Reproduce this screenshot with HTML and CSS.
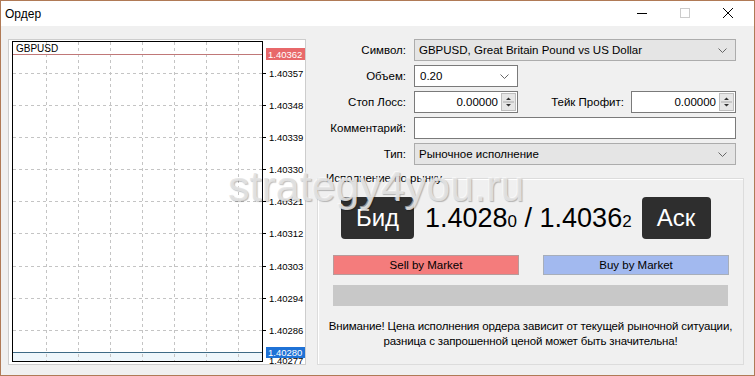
FILE: index.html
```html
<!DOCTYPE html>
<html lang="ru">
<head>
<meta charset="utf-8">
<title>Ордер</title>
<link rel="stylesheet" href="styles.css">
</head>
<body>
<div class="window">
  <div class="titlebar">
    <span class="title">Ордер</span>
    <svg class="controls" width="130" height="25" viewBox="0 0 130 25">
      <line x1="13" y1="12.5" x2="23" y2="12.5" stroke="#000" stroke-width="1"/>
      <rect x="56.5" y="7.5" width="9" height="9" fill="none" stroke="#cccccc" stroke-width="1"/>
      <path d="M99 7 L109 17 M109 7 L99 17" stroke="#000" stroke-width="1" fill="none"/>
    </svg>
  </div>
  <div class="body">
    <div class="chart">
      <svg width="296" height="324" viewBox="0 0 296 324">
        <rect x="3.5" y="312.5" width="250" height="9" fill="#eef6fb"/>
        <g stroke="#c4c4c4" stroke-width="1" stroke-dasharray="3 3">
          <line x1="37.5" y1="2" x2="37.5" y2="321"/>
          <line x1="69.5" y1="2" x2="69.5" y2="321"/>
          <line x1="101.5" y1="2" x2="101.5" y2="321"/>
          <line x1="133.5" y1="2" x2="133.5" y2="321"/>
          <line x1="165.5" y1="2" x2="165.5" y2="321"/>
          <line x1="197.5" y1="2" x2="197.5" y2="321"/>
          <line x1="229.5" y1="2" x2="229.5" y2="321"/>
          <line x1="4" y1="33.5" x2="253" y2="33.5"/>
          <line x1="4" y1="65.5" x2="253" y2="65.5"/>
          <line x1="4" y1="97.5" x2="253" y2="97.5"/>
          <line x1="4" y1="129.5" x2="253" y2="129.5"/>
          <line x1="4" y1="161.5" x2="253" y2="161.5"/>
          <line x1="4" y1="193.5" x2="253" y2="193.5"/>
          <line x1="4" y1="226.5" x2="253" y2="226.5"/>
          <line x1="4" y1="258.5" x2="253" y2="258.5"/>
          <line x1="4" y1="290.5" x2="253" y2="290.5"/>
        </g>
        <g stroke="#000" stroke-width="1">
          <line x1="254" y1="33.5" x2="257" y2="33.5"/>
          <line x1="254" y1="65.5" x2="257" y2="65.5"/>
          <line x1="254" y1="97.5" x2="257" y2="97.5"/>
          <line x1="254" y1="129.5" x2="257" y2="129.5"/>
          <line x1="254" y1="161.5" x2="257" y2="161.5"/>
          <line x1="254" y1="193.5" x2="257" y2="193.5"/>
          <line x1="254" y1="226.5" x2="257" y2="226.5"/>
          <line x1="254" y1="258.5" x2="257" y2="258.5"/>
          <line x1="254" y1="290.5" x2="257" y2="290.5"/>
        </g>
        <line x1="4" y1="14.5" x2="253" y2="14.5" stroke="#c07878" stroke-width="1"/>
        <line x1="4" y1="312.5" x2="253" y2="312.5" stroke="#3d6a86" stroke-width="1"/>
        <rect x="3.5" y="1.5" width="250" height="320" fill="none" stroke="#000" stroke-width="1"/>
        <text class="sym" x="7" y="12">GBPUSD</text>
        <g class="axis">
          <text x="260" y="37">1.40357</text>
          <text x="260" y="69">1.40348</text>
          <text x="260" y="101">1.40339</text>
          <text x="260" y="133">1.40330</text>
          <text x="260" y="165">1.40321</text>
          <text x="260" y="197">1.40312</text>
          <text x="260" y="230">1.40303</text>
          <text x="260" y="262">1.40294</text>
          <text x="260" y="294">1.40286</text>
          <text x="260" y="324">1.40277</text>
        </g>
        <rect x="257" y="8" width="39" height="12" fill="#e8686a"/>
        <text class="tag" x="259" y="17.5">1.40362</text>
        <rect x="257" y="307" width="39" height="11" fill="#1f72d6"/>
        <text class="tag" x="259" y="316">1.40280</text>
      </svg>
    </div>
    <div class="form">
      <div class="fields">
        <label class="lbl">Символ:</label>
        <div class="select grey wide"><span>GBPUSD, Great Britain Pound vs US Dollar</span><svg class="chev" width="9" height="5" viewBox="0 0 9 5"><path d="M0.5 0.5 L4.5 4.5 L8.5 0.5" fill="none" stroke="#666" stroke-width="1"/></svg></div>

        <label class="lbl">Объем:</label>
        <div class="row"><div class="select white vol"><span>0.20</span><svg class="chev" width="9" height="5" viewBox="0 0 9 5"><path d="M0.5 0.5 L4.5 4.5 L8.5 0.5" fill="none" stroke="#666" stroke-width="1"/></svg></div></div>

        <label class="lbl">Стоп Лосс:</label>
        <div class="row">
          <div class="spin"><span class="val">0.00000</span><span class="spinbtn"><svg width="13" height="16" viewBox="0 0 13 16"><path d="M4 6 L6.5 3.5 L9 6 Z M4 10 L6.5 12.5 L9 10 Z" fill="#333"/><line x1="1" y1="8" x2="12" y2="8" stroke="#aaa"/></svg></span></div>
          <span class="lbl mid">Тейк Профит:</span>
          <div class="spin tp"><span class="val">0.00000</span><span class="spinbtn"><svg width="13" height="16" viewBox="0 0 13 16"><path d="M4 6 L6.5 3.5 L9 6 Z M4 10 L6.5 12.5 L9 10 Z" fill="#333"/><line x1="1" y1="8" x2="12" y2="8" stroke="#aaa"/></svg></span></div>
        </div>

        <label class="lbl">Комментарий:</label>
        <div class="input wide"></div>

        <label class="lbl">Тип:</label>
        <div class="select grey wide"><span>Рыночное исполнение</span><svg class="chev" width="9" height="5" viewBox="0 0 9 5"><path d="M0.5 0.5 L4.5 4.5 L8.5 0.5" fill="none" stroke="#666" stroke-width="1"/></svg></div>
      </div>

      <fieldset class="market">
        <legend>Исполнение по рынку</legend>
        <div class="quote">
          <div class="badge bid">Бид</div>
          <div class="prices">1.4028<small>0</small> / 1.4036<small>2</small></div>
          <div class="badge ask">Аск</div>
        </div>
        <div class="buttons">
          <button class="btn sell">Sell by Market</button>
          <button class="btn buy">Buy by Market</button>
        </div>
        <div class="progress"></div>
        <p class="warn">Внимание! Цена исполнения ордера зависит от текущей рыночной ситуации,<br>разница с запрошенной ценой может быть значительна!</p>
      </fieldset>
    </div>
  </div>
  <div class="watermark">strategy4you.ru</div>
</div>
</body>
</html>
```

FILE: styles.css
```css
html, body {
  margin: 0;
  padding: 0;
  background: #ffffff;
}

.window {
  position: relative;
  width: 755px;
  height: 376px;
  box-sizing: border-box;
  border: 1px solid #b07a56;
  background: #f0f0f0;
  display: flex;
  flex-direction: column;
  overflow: hidden;
  font-family: "Liberation Sans", Arial, sans-serif;
  font-size: 11.5px;
  color: #000;
}

.titlebar {
  height: 25px;
  flex: none;
  background: #ffffff;
  display: flex;
  align-items: center;
  justify-content: space-between;
  padding-left: 4px;
}

.title {
  font-size: 12px;
}

.controls {
  display: block;
}

.body {
  display: flex;
  padding: 13px 0 0 7px;
}

.chart {
  width: 298px;
  height: 326px;
  box-sizing: border-box;
  border: 1px solid #cdcdcd;
  background: #ffffff;
  flex: none;
}

.chart svg {
  display: block;
}

.chart text {
  font-family: "Liberation Sans", Arial, sans-serif;
  font-size: 9.5px;
  fill: #000;
}

.chart .sym {
  font-size: 10px;
}

.chart .tag {
  fill: #ffffff;
}

.form {
  margin-left: 8px;
  width: 430px;
  display: flex;
  flex-direction: column;
}

.fields {
  display: grid;
  grid-template-columns: 92px 322px;
  column-gap: 8px;
  row-gap: 4px;
  grid-auto-rows: 22px;
}

.lbl {
  display: flex;
  align-items: center;
  justify-content: flex-end;
  color: #000;
}

.row {
  display: flex;
  align-items: stretch;
}

.select,
.input,
.spin {
  box-sizing: border-box;
  height: 22px;
  display: flex;
  align-items: center;
}

.select {
  justify-content: space-between;
  padding: 0 8px 0 4px;
}

.select.grey {
  background: #e5e5e5;
  border: 1px solid #acacac;
}

.select.white {
  background: #ffffff;
  border: 1px solid #7a7a7a;
}

.select.vol {
  width: 104px;
  padding-left: 5px;
}

.chev {
  display: block;
}

.input {
  background: #ffffff;
  border: 1px solid #7a7a7a;
}

.spin {
  width: 104px;
  background: #ffffff;
  border: 1px solid #7a7a7a;
  justify-content: flex-end;
  padding: 0 1px 0 4px;
}

.spin .val {
  margin-right: 3px;
}

.spinbtn {
  width: 15px;
  height: 18px;
  background: #e6e6e6;
  border: 1px solid #bdbdbd;
  box-sizing: border-box;
  display: flex;
  align-items: center;
  justify-content: center;
}

.spinbtn svg {
  display: block;
}

.lbl.mid {
  flex: 1;
  padding-right: 7px;
}

.spin.tp {
  width: 105px;
}

.market {
  margin: 6px 0 0 3px;
  padding: 0 15px;
  width: 427px;
  height: 194px;
  box-sizing: border-box;
  border: 1px solid #dcdcdc;
  box-shadow: inset 1px 1px 0 #ffffff;
  display: flex;
  flex-direction: column;
  min-width: 0;
}

.market legend {
  padding: 0 1px;
  margin-left: -8px;
  line-height: 14px;
}

.quote {
  display: flex;
  align-items: center;
  justify-content: flex-start;
  margin-top: 12px;
  height: 42px;
}

.badge {
  height: 42px;
  box-sizing: border-box;
  background: #2e2e2e;
  color: #ffffff;
  border-radius: 4px;
  font-size: 24px;
  display: flex;
  align-items: center;
  justify-content: center;
  flex: none;
}

.bid {
  width: 73px;
  margin-left: 8px;
}

.ask {
  width: 69px;
}

.prices {
  font-size: 27px;
  margin: 0 10px 0 11px;
  white-space: nowrap;
}

.prices small {
  font-size: 17px;
}

.buttons {
  display: grid;
  grid-template-columns: 186px 186px;
  column-gap: 24px;
  margin-top: 16px;
}

.btn {
  height: 20px;
  margin: 0;
  padding: 0;
  box-sizing: border-box;
  font-family: "Liberation Sans", Arial, sans-serif;
  font-size: 11.5px;
  color: #000;
}

.sell {
  background: #f47c7c;
  border: 1px solid #b99a9a;
}

.buy {
  background: #a2b9ef;
  border: 1px solid #a7aeba;
}

.progress {
  margin-top: 10px;
  height: 21px;
  background: #c8c8c8;
}

.warn {
  margin: 13px -10px 0;
  text-align: center;
  line-height: 15px;
  white-space: nowrap;
  letter-spacing: -0.15px;
}

.watermark {
  position: absolute;
  left: 227px;
  top: 161px;
  font-size: 43px;
  color: rgba(228, 228, 228, 0.88);
  text-shadow: 1px 1px 1px rgba(0, 0, 0, 0.25), -1px -1px 0 rgba(255, 255, 255, 0.5);
  pointer-events: none;
  white-space: nowrap;
}
```
